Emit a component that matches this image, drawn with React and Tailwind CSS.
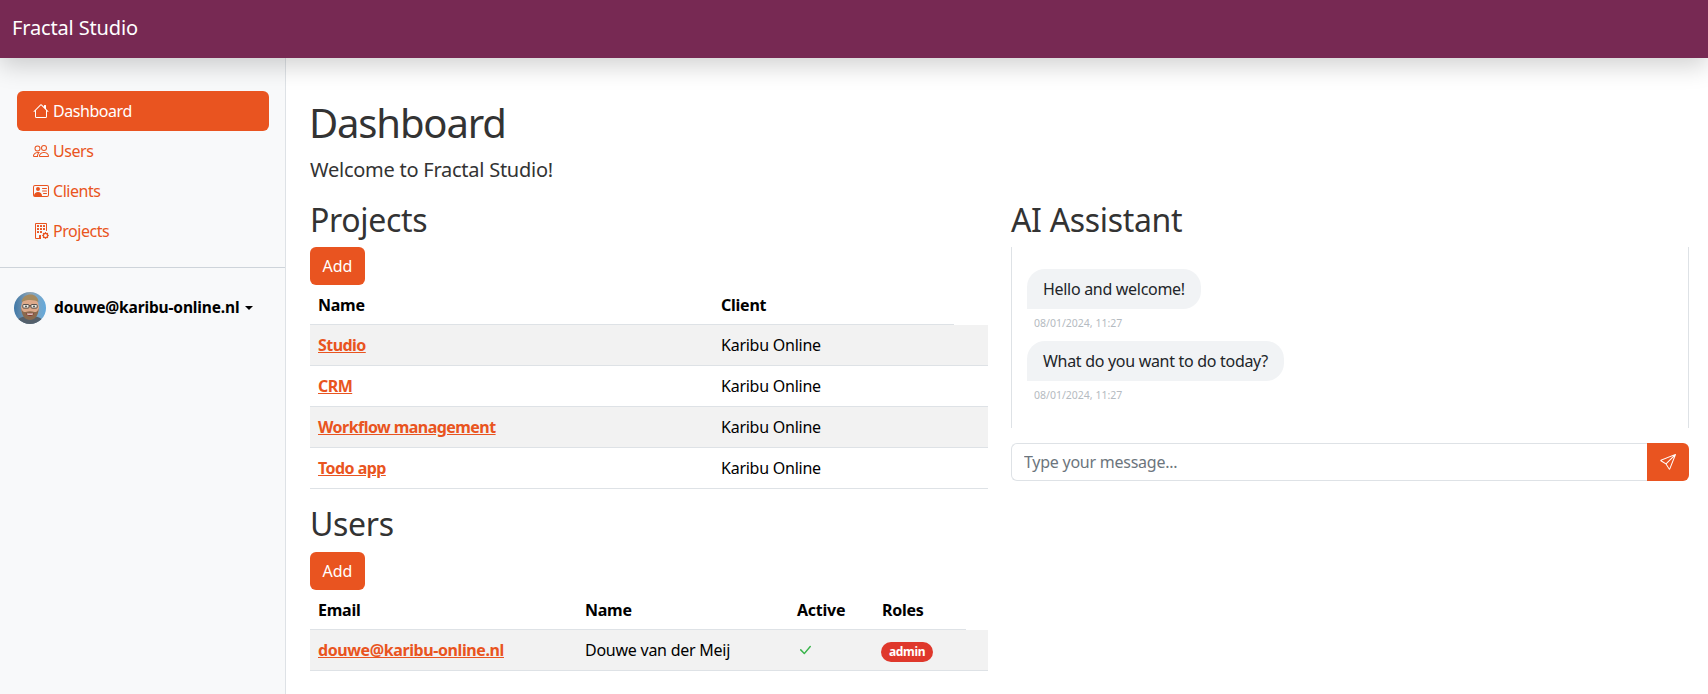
import { BsHouse, BsPeople, BsPersonVcard, BsBuildingGear, BsSend, BsCheckLg } from "react-icons/bs";

function Avatar() {
  return (
    <svg viewBox="0 0 32 32" className="w-8 h-8 shrink-0 rounded-full">
      <defs>
        <linearGradient id="bg" x1="0" y1="0" x2="1" y2="0">
          <stop offset="0" stopColor="#3f78a8" />
          <stop offset="0.5" stopColor="#8fa4b2" />
          <stop offset="1" stopColor="#63a9dc" />
        </linearGradient>
      </defs>
      <rect width="32" height="32" fill="url(#bg)" />
      <path d="M2 32c1-6 6-8 14-8s13 2 14 8z" fill="#54606b" />
      <ellipse cx="16" cy="15.500" rx="9" ry="10.500" fill="#dda98a" />
      <path d="M7.500 10c1-5.500 5-7.500 9-7.500s7.700 2.500 8 7.500c-3-2.500-12-3-17 0z" fill="#a58a5f" />
      <path d="M7.200 16c.5 8.500 4.300 12 8.800 12s8.300-3.500 8.800-12c-1 3.500-3 4.500-4.600 4-2.500-1-5.900-1-8.400 0-1.600.5-3.600-.5-4.600-4z" fill="#8a6a4e" />
      <path d="M12 21.500c2.500-1 5.500-1 8 0-1 3.200-7 3.200-8 0z" fill="#8c3430" />
      <path d="M12.800 21.600h6.400l-.7 1.100h-5z" fill="#f2efe8" />
      <rect x="8.800" y="12.500" width="6.200" height="3.600" rx="1" fill="#efe9df" stroke="#333" strokeWidth="0.8" />
      <rect x="17" y="12.500" width="6.200" height="3.600" rx="1" fill="#efe9df" stroke="#333" strokeWidth="0.8" />
      <path d="M15 13.800h2" stroke="#333" strokeWidth="0.8" />
      <circle cx="12" cy="14.300" r="0.9" fill="#3a3a3a" />
      <circle cx="20" cy="14.300" r="0.9" fill="#3a3a3a" />
    </svg>
  );
}

function NavItem({ icon: Icon, label, active }) {
  return (
    <a
      href="#"
      className={
        active
          ? "flex items-center h-10 pl-4 rounded-md bg-[#e95420] text-white tracking-[-0.45px]"
          : "flex items-center h-10 pl-4 rounded-md text-[#e95420] tracking-[-0.45px]"
      }
    >
      <Icon className="w-4 h-4 mr-1 shrink-0" />
      <span>{label}</span>
    </a>
  );
}

function AddButton() {
  return (
    <button className="block w-[55px] h-[38px] rounded-md bg-[#e95420] text-white text-base">Add</button>
  );
}

function Heading({ children }) {
  return <h2 className="text-[32px] leading-[38.4px] mb-2 text-[#333333] font-normal tracking-[-0.33px]">{children}</h2>;
}

function Bubble({ text, time }) {
  return (
    <div className="mb-[10px]">
      <div className="w-fit h-10 px-4 flex items-center bg-[#f1f3f5] text-[#212529] rounded-[18px] rounded-bl-none tracking-[-0.3px]">{text}</div>
      <div className="text-[10.500px] leading-[15px] mt-[7px] pl-[7px] text-[#b5bbc1]">{time}</div>
    </div>
  );
}

const projects = ["Studio", "CRM", "Workflow management", "Todo app"];

export default function App() {
  return (
    <div className="h-[694px] w-[1708px] overflow-hidden flex flex-col bg-white font-['Noto_Sans',sans-serif] text-base text-black">
      <header className="relative z-10 h-[58px] shrink-0 flex items-center pl-3 pb-[2px] bg-[#772953] text-white text-[20px] tracking-[-0.15px] shadow-[0_8px_24px_rgba(0,0,0,0.18)]">
        Fractal Studio
      </header>
      <div className="flex flex-1 min-h-0">
        <aside className="w-[286px] shrink-0 bg-[#f8f9fa] border-r border-[#dee2e6]">
          <nav className="pt-[33px] pl-[17px] pr-4 pb-4">
            <NavItem icon={BsHouse} label="Dashboard" active />
            <NavItem icon={BsPeople} label="Users" />
            <NavItem icon={BsPersonVcard} label="Clients" />
            <NavItem icon={BsBuildingGear} label="Projects" />
          </nav>
          <hr className="border-[#ced4da]" />
          <div className="flex items-center pl-[14px] pt-6">
            <Avatar />
            <span className="ml-2 font-bold text-[15.500px] tracking-[-0.15px]">douwe@karibu-online.nl</span>
            <span className="ml-[6px] border-x-[4.500px] border-t-[4.500px] border-x-transparent border-t-black" />
          </div>
        </aside>
        <main className="flex-1 min-w-0 pt-[40.500px] pl-6 text-[#333333]">
          <h1 className="text-[40px] leading-[48px] mb-2 font-normal tracking-[-1.15px] -ml-px">Dashboard</h1>
          <p className="text-[20px] leading-[30px] mb-4 tracking-[-0.25px]">Welcome to Fractal Studio!</p>
          <div className="flex gap-[23px]">
            <section className="w-[678px]">
              <Heading>Projects</Heading>
              <AddButton />
              <table className="table-fixed w-full border-collapse text-black mb-4 tracking-[-0.25px]">
                <colgroup>
                  <col className="w-[403px]" />
                  <col className="w-[241px]" />
                  <col />
                </colgroup>
                <thead>
                  <tr className="h-10">
                    <th className="text-left font-bold px-2 border-b border-[#dee2e6]">Name</th>
                    <th className="text-left font-bold px-2 border-b border-[#dee2e6]">Client</th>
                    <th />
                  </tr>
                </thead>
                <tbody>
                  {projects.map((p, i) => (
                    <tr key={p} className={i % 2 === 0 ? "h-[41px] bg-[#f2f2f2] border-b border-[#dee2e6]" : "h-[41px] border-b border-[#dee2e6]"}>
                      <td className="px-2">
                        <a href="#" className="font-bold text-[#e95420] underline tracking-[-0.55px]">{p}</a>
                      </td>
                      <td className="px-2" colSpan={2}>Karibu Online</td>
                    </tr>
                  ))}
                </tbody>
              </table>
              <Heading>Users</Heading>
              <AddButton />
              <table className="table-fixed w-full border-collapse text-black tracking-[-0.25px]">
                <colgroup>
                  <col className="w-[267px]" />
                  <col className="w-[212px]" />
                  <col className="w-[85px]" />
                  <col className="w-[92px]" />
                  <col />
                </colgroup>
                <thead>
                  <tr className="h-10">
                    <th className="text-left font-bold px-2 border-b border-[#dee2e6]">Email</th>
                    <th className="text-left font-bold px-2 border-b border-[#dee2e6]">Name</th>
                    <th className="text-left font-bold px-2 border-b border-[#dee2e6]">Active</th>
                    <th className="text-left font-bold px-2 border-b border-[#dee2e6]">Roles</th>
                    <th />
                  </tr>
                </thead>
                <tbody>
                  <tr className="h-[41px] bg-[#f2f2f2] border-b border-[#dee2e6]">
                    <td className="px-2">
                      <a href="#" className="font-bold text-[#e95420] underline tracking-[-0.4px]">douwe@karibu-online.nl</a>
                    </td>
                    <td className="px-2">Douwe van der Meij</td>
                    <td className="px-2"><BsCheckLg className="w-4 h-4 text-[#38b44a]" /></td>
                    <td className="px-2 -translate-x-px" colSpan={2}>
                      <span className="inline-block rounded-full bg-[#df382c] text-white text-[12px] leading-3 font-bold px-2 py-[4px] tracking-[-0.35px]">admin</span>
                    </td>
                  </tr>
                </tbody>
              </table>
            </section>
            <section className="w-[678px]">
              <Heading>AI Assistant</Heading>
              <div className="h-[181px] border-x border-[#dee2e6] pt-[22px] px-[15px]">
                <Bubble text="Hello and welcome!" time="08/01/2024, 11:27" />
                <Bubble text="What do you want to do today?" time="08/01/2024, 11:27" />
              </div>
              <div className="flex h-[38px] mt-[15px]">
                <input
                  readOnly
                  placeholder="Type your message..."
                  className="flex-1 min-w-0 px-3 border border-r-0 border-[#dee2e6] rounded-l-md outline-none text-base tracking-[-0.25px] placeholder:text-[#6c757d]"
                />
                <button className="w-[42px] flex items-center justify-center bg-[#e95420] text-white rounded-r-md">
                  <BsSend className="w-4 h-4" />
                </button>
              </div>
            </section>
          </div>
        </main>
      </div>
    </div>
  );
}
